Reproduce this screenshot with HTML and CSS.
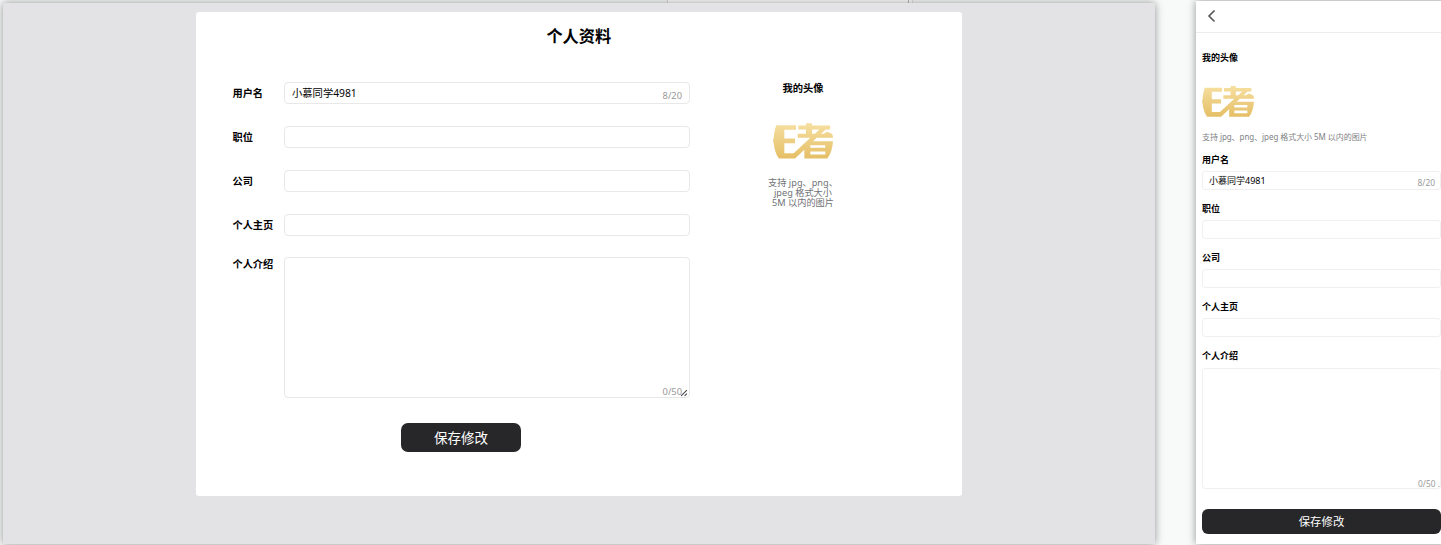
FILE: index.html
```html
<!DOCTYPE html>
<html lang="zh-CN">
<head>
<meta charset="utf-8">
<title>个人资料</title>
<link rel="stylesheet" href="styles.css">
</head>
<body>
<svg class="defs" width="0" height="0" aria-hidden="true">
  <defs>
    <linearGradient id="gold" x1="0" y1="0" x2="0" y2="1">
      <stop offset="0" stop-color="#f6dfa0"/>
      <stop offset="1" stop-color="#e5bf66"/>
    </linearGradient>
    <symbol id="logo" viewBox="0 0 180 107">
      <path fill="url(#gold)" d="M10 6H69V20H34V46H66V60H34V90H62L112 44H74V32H99V19H76V7H99V0H117V7H171V19H158L144 32H152L162 26L177 32Q180 38 180 44H131L120 54H180Q178 86 163 106H94V80L66 106H18Q6 92 2 60L0 53L2 46Q4 20 10 6ZM117 19V32H126L139 19ZM112 66V74H157V66ZM112 85V94H157V85Z" fill-rule="evenodd"/>
    </symbol>
  </defs>
</svg>
<main class="stage">
  <section class="desktop">
    <div class="card">
      <h1 class="title">个人资料</h1>
      <div class="columns">
        <form class="form">
          <div class="row"><label class="label">用户名</label><div class="field">小慕同学4981<span class="count">8/20</span></div></div>
          <div class="row"><label class="label">职位</label><div class="field"></div></div>
          <div class="row"><label class="label">公司</label><div class="field"></div></div>
          <div class="row"><label class="label">个人主页</label><div class="field"></div></div>
          <div class="row row-area"><label class="label">个人介绍</label><div class="field area"><span class="count">0/50</span><svg class="grip" viewBox="0 0 7 7"><path d="M1 6L6 1M4 6L6 4"/></svg></div></div>
          <button class="save" type="button">保存修改</button>
        </form>
        <aside class="avatar">
          <h2 class="avatar-title">我的头像</h2>
          <svg class="logo"><use href="#logo"/></svg>
          <p class="hint">支持 jpg、png、<br>jpeg 格式大小<br>5M 以内的图片</p>
        </aside>
      </div>
    </div>
  </section>
  <section class="phone">
    <header class="bar"><svg class="back" viewBox="0 0 9 14"><path d="M7.5 1.5L2 7L7.5 12.5"/></svg></header>
    <div class="content">
      <h2 class="m-label m-avatar">我的头像</h2>
      <svg class="m-logo"><use href="#logo"/></svg>
      <p class="m-hint">支持 jpg、png、jpeg 格式大小 5M 以内的图片</p>
      <div class="m-row"><label class="m-label">用户名</label><div class="m-field">小慕同学4981<span class="count">8/20</span></div></div>
      <div class="m-row"><label class="m-label">职位</label><div class="m-field"></div></div>
      <div class="m-row"><label class="m-label">公司</label><div class="m-field"></div></div>
      <div class="m-row"><label class="m-label">个人主页</label><div class="m-field"></div></div>
      <div class="m-row"><label class="m-label">个人介绍</label><div class="m-field m-area"><span class="count">0/50 .</span></div></div>
      <button class="m-save" type="button">保存修改</button>
    </div>
  </section>
</main>
</body>
</html>
```

FILE: styles.css
```css
* { box-sizing: border-box; }
body {
  margin: 0;
  background: #f8faf9;
  color: #000;
  font-family: "Noto Sans", "Noto Sans CJK SC", sans-serif;
  overflow: hidden;
}
h1, h2, p { margin: 0; }
button { border: 0; padding: 0; font-family: inherit; color: #fff; background: #272729; }
.defs { position: absolute; }
.stage {
  display: flex;
  gap: 41px;
  width: 1441px;
  height: 545px;
  padding: 3px 0 1px 3px;
  overflow: hidden;
  background: linear-gradient(90deg, transparent 667px, #ddd 667px 668px, #fff 668px 908px, #bbb 908px 909px, #fff 909px 912px, #e4e4e4 912px 913px, transparent 913px) 0 0 / 100% 3px no-repeat;
}
.desktop {
  width: 1152px;
  flex: none;
  padding: 8.5px 0 0 193px;
  background: #e3e3e5;
  box-shadow: 0 0 8px rgba(0, 0, 0, .42);
}
.card {
  width: 766px;
  height: 484.5px;
  padding: 10.5px 37px 0 36.5px;
  background: #fff;
  border-radius: 3px;
}
.title { font-size: 16.2px; line-height: 28px; text-align: center; }
.columns { display: flex; margin-top: 31px; }
.form { width: 457px; padding-top: 1px; display: flex; flex-direction: column; gap: 22px; }
.row { display: flex; height: 22px; align-items: center; }
.label { width: 51.5px; flex: none; font-size: 10.2px; line-height: 15px; font-weight: 700; }
.field {
  position: relative;
  width: 406px;
  height: 22px;
  padding-left: 7px;
  border: 1px solid #e8e8e9;
  border-radius: 4px;
  font-size: 10.3px;
  line-height: 20px;
}
.row-area { height: 141px; align-items: flex-start; margin-top: -1px; }
.area { height: 141px; }
.count {
  position: absolute;
  right: 6.5px;
  bottom: -1px;
  color: #999;
  font-size: 9.3px;
  line-height: 16px;
}
.area .count { bottom: -3px; }
.grip { position: absolute; right: 1px; bottom: 0; width: 8px; height: 8px; stroke: #444; stroke-width: .9; fill: none; }
.save { width: 120px; height: 29px; margin: 3px 0 0 168.5px; border-radius: 7px; font-size: 13.5px; line-height: 30px; }
.avatar { width: 120px; margin-left: 53.5px; display: flex; flex-direction: column; align-items: center; }
.avatar-title { font-size: 10.3px; line-height: 15px; }
.logo { width: 60px; height: 36px; margin-top: 27px; }
.hint { margin: 18.5px 0 0; width: 90px; text-align: center; color: #707276; font-size: 9.2px; line-height: 10.2px; }

.phone {
  width: 252px;
  flex: none;
  height: 543px;
  margin-top: -2px;
  background: #fff;
  box-shadow: 0 0 8px rgba(0, 0, 0, .42);
}
.bar { height: 31.5px; padding: 8px 0 0 11px; border-bottom: 1px solid #ececec; }
.back { display: block; width: 9px; height: 14px; fill: none; stroke: #555; stroke-width: 1.6; }
.content { width: 245px; padding: 18.5px 0 0 6px; }
.m-label { display: block; font-size: 9px; line-height: 14px; font-weight: 700; }
.m-logo { display: block; width: 52px; height: 31px; margin-top: 21px; }
.m-hint { margin: 13px 0 10px; font-size: 8px; letter-spacing: -.06px; line-height: 13px; color: #808286; white-space: nowrap; }
.m-row { height: 49.1px; }
.m-field {
  position: relative;
  height: 19px;
  margin-top: 4.2px;
  padding-left: 6px;
  border: 1px solid #f0f0f1;
  border-radius: 3px;
  font-size: 9px;
  line-height: 17px;
}
.m-field .count { right: 5px; bottom: -2px; font-size: 8.4px; }
.m-area { height: 121px; }
.m-area .count { right: 0; bottom: -4px; }
.m-save { display: block; width: 239px; height: 25px; margin-top: 110.5px; border-radius: 6px; font-size: 11.4px; line-height: 25px; }
```
